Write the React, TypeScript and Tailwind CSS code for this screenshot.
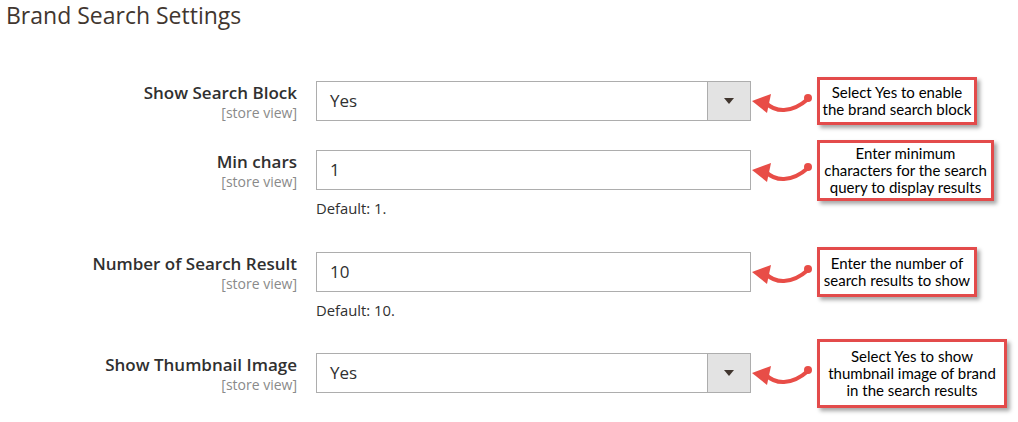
import React from 'react';

type Row = {
  label: string;
  kind: 'select' | 'input';
  value: string;
  note?: string;
  callout: string[];
  calloutBox: string;
  gapAfter: string;
};

const rows: Row[] = [
  {
    label: 'Show Search Block',
    kind: 'select',
    value: 'Yes',
    callout: ['Select Yes to enable', 'the brand search block'],
    calloutBox: 'w-[160px] py-[4px]',
    gapAfter: 'mb-[29px]',
  },
  {
    label: 'Min chars',
    kind: 'input',
    value: '1',
    note: 'Default: 1.',
    callout: ['Enter minimum', 'characters for the search', 'query to display results'],
    calloutBox: 'w-[177px] py-[2px]',
    gapAfter: 'mb-[34px]',
  },
  {
    label: 'Number of Search Result',
    kind: 'input',
    value: '10',
    note: 'Default: 10.',
    callout: ['Enter the number of', 'search results to show'],
    calloutBox: 'w-[160px] py-[5px]',
    gapAfter: 'mb-[33px]',
  },
  {
    label: 'Show Thumbnail Image',
    kind: 'select',
    value: 'Yes',
    callout: ['Select Yes to show', 'thumbnail image of brand', 'in the search results'],
    calloutBox: 'w-[190px] py-[6px]',
    gapAfter: '',
  },
];

function CurvedArrow() {
  return (
    <svg width="66" height="30" viewBox="0 0 66 30" className="flex-shrink-0">
      <path
        d="M15 17 C 24 26, 40 28, 57 13"
        fill="none"
        stroke="#e84d47"
        strokeWidth="4"
        strokeLinecap="round"
      />
      <polygon points="1,15 20,8 16,27" fill="#e84d47" />
      <circle cx="57" cy="12" r="4" fill="#e84d47" />
    </svg>
  );
}

function Field({ row }: { row: Row }) {
  return (
    <div className="flex h-10 w-[435px] border border-[#adadad] bg-white">
      <div className="flex-1 flex items-center pl-[13px] text-[17px] text-[#303030]">
        {row.value}
      </div>
      {row.kind === 'select' && (
        <div className="w-[43px] border-l border-[#adadad] bg-[#e3e3e3] flex items-center justify-center">
          <svg width="10" height="6" viewBox="0 0 10 6">
            <polygon points="0,0 10,0 5,6" fill="#41362f" />
          </svg>
        </div>
      )}
    </div>
  );
}

export default function App() {
  return (
    <div
      className="w-[1018px] h-[422px] bg-white overflow-hidden"
      style={{ fontFamily: '"Open Sans", "Noto Sans", sans-serif' }}
    >
      <h1 className="pl-[6px] text-[23px] leading-[30px] text-[#41362f]">
        Brand Search Settings
      </h1>

      <div className="mt-[51px]">
        {rows.map((row) => (
          <div key={row.label} className={`flex ${row.gapAfter}`}>
            {/* Label */}
            <div className="w-[297px] text-right pt-[1px]">
              <div className="text-[17px] leading-[22px] font-semibold text-[#303030]">
                {row.label}
              </div>
              <div className="text-[14px] leading-[17px] text-[#8a8a8a]">[store view]</div>
            </div>

            {/* Control + annotation */}
            <div className="ml-[19px]">
              <div className="flex items-center h-10">
                <Field row={row} />
                <CurvedArrow />
                <div
                  className={`${row.calloutBox} border-[3px] border-[#e34b4b] bg-white shadow-[3px_3px_4px_rgba(0,0,0,0.35)] text-center text-[15px] leading-[17px] text-black`}
                  style={{ fontFamily: 'Lato, "Liberation Sans", sans-serif' }}
                >
                  {row.callout.map((line) => (
                    <div key={line}>{line}</div>
                  ))}
                </div>
              </div>
              {row.note && (
                <div className="mt-[8px] text-[14.8px] leading-[20px] text-[#303030]">{row.note}</div>
              )}
            </div>
          </div>
        ))}
      </div>
    </div>
  );
}
